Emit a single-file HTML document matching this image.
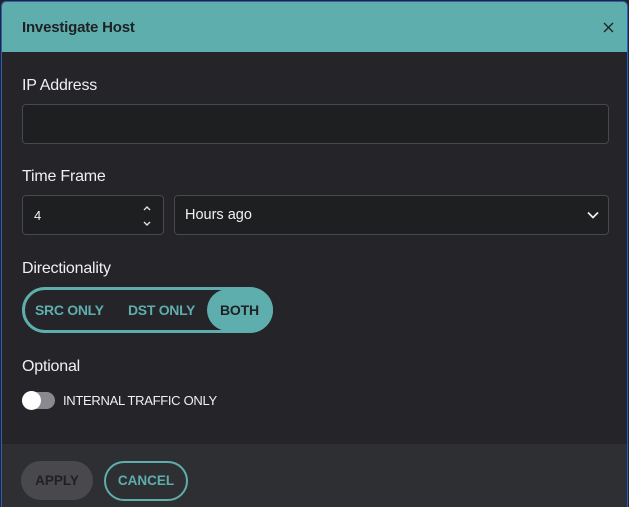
<!DOCTYPE html>
<html><head><style>
*{box-sizing:border-box;margin:0;padding:0}
body{width:629px;height:507px;background:#242429;font-family:"Liberation Sans",sans-serif;position:relative;overflow:hidden;color:#f2f2f2}
.frame{position:absolute;left:1px;top:1px;right:1px;bottom:0;border:1px solid #2a5fc0;border-bottom:none;border-radius:5px 5px 0 0;overflow:hidden;background:#242429}
.hdr{position:absolute;left:0;top:0;right:0;height:50px;background:#5faeae}
.abs{position:absolute}
.lbl{font-size:16px;color:#f0f0f0;letter-spacing:-0.2px}
.inp{position:absolute;background:#1e1f21;border:1px solid #48484d;border-radius:4px}
.foot{position:absolute;left:0;right:0;top:442px;bottom:0;background:#2e2f33}
</style></head><body>
<div class="frame">
<div class="hdr">
<div class="abs" style="left:20px;top:17px;font-size:15px;font-weight:bold;color:#1f2124;letter-spacing:-0.2px">Investigate Host</div>
<svg class="abs" style="left:601px;top:20px" width="11" height="11" viewBox="0 0 11 11"><path d="M1 1L10 10M10 1L1 10" stroke="#1f2124" stroke-width="1.3"/></svg>
</div>
<div class="abs lbl" style="left:20px;top:75px">IP Address</div>
<div class="inp" style="left:20px;top:102px;width:587px;height:40px"></div>
<div class="abs lbl" style="left:20px;top:166px">Time Frame</div>
<div class="inp" style="left:20px;top:193px;width:142px;height:40px"><span class="abs" style="left:11px;top:12px;font-size:13px">4</span>
<svg class="abs" style="left:119px;top:8px" width="10" height="24" viewBox="0 0 10 24"><path d="M2 6L5 3L8 6M2 18L5 21L8 18" stroke="#ddd" stroke-width="1.4" fill="none"/></svg></div>
<div class="inp" style="left:172px;top:193px;width:435px;height:40px"><span class="abs" style="left:10px;top:11px;font-size:14.5px">Hours ago</span>
<svg class="abs" style="left:412px;top:15px" width="12" height="8" viewBox="0 0 12 8"><path d="M1 1.5L6 6.5L11 1.5" stroke="#eee" stroke-width="1.7" fill="none"/></svg></div>
<div class="abs lbl" style="left:20px;top:258px">Directionality</div>
<div class="abs" style="left:20px;top:285px;width:251px;height:46px;border:3px solid #5faeae;border-radius:23px"></div>
<div class="abs" style="left:205px;top:287px;width:66px;height:42px;background:#5faeae;border-radius:21px"></div>
<div class="abs" style="left:33px;top:300px;font-size:14px;font-weight:bold;color:#5faeae;letter-spacing:-0.3px">SRC ONLY</div>
<div class="abs" style="left:126px;top:300px;font-size:14px;font-weight:bold;color:#5faeae;letter-spacing:-0.3px">DST ONLY</div>
<div class="abs" style="left:218px;top:300px;font-size:14px;font-weight:bold;color:#1f2124;letter-spacing:-0.2px">BOTH</div>
<div class="abs lbl" style="left:20px;top:356px">Optional</div>
<div class="abs" style="left:20px;top:390px;width:33px;height:17px;background:#8a8a8e;border-radius:9px"></div>
<div class="abs" style="left:20px;top:389px;width:19px;height:19px;background:#fff;border-radius:50%"></div>
<div class="abs" style="left:61px;top:391px;font-size:13px;color:#f0f0f0;letter-spacing:-0.3px">INTERNAL TRAFFIC ONLY</div>
<div class="foot">
<div class="abs" style="left:19px;top:17px;width:72px;height:39px;background:#48484d;border-radius:20px;font-size:13.5px;font-weight:bold;color:#1f2124;text-align:center;line-height:39px">APPLY</div>
<div class="abs" style="left:102px;top:17px;width:84px;height:40px;border:2px solid #5faeae;border-radius:20px;font-size:13.5px;font-weight:bold;color:#5faeae;text-align:center;line-height:36px">CANCEL</div>
</div>
</div>
</body></html>
